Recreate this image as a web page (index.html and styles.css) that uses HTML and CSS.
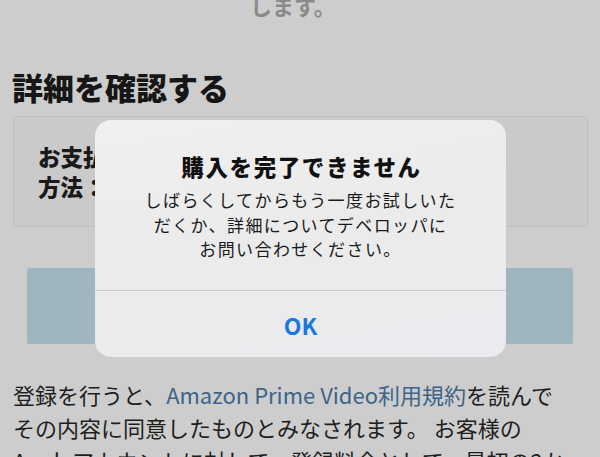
FILE: index.html
```html
<!DOCTYPE html>
<html lang="ja">
<head>
<meta charset="utf-8">
<link rel="stylesheet" href="styles.css">
</head>
<body>
<div class="page">
  <p class="lead">します。</p>
  <h2 class="heading">詳細を確認する</h2>
  <div class="details">
    <p class="details-text">お支払い<br>方法：</p>
  </div>
  <div class="action"></div>
  <p class="terms">登録を行うと、<span class="link">Amazon Prime Video利用規約</span>を読んで<br>その内容に同意したものとみなされます。 お客様の<br>Appleアカウントに対して、登録料金として、最初の2か</p>
</div>
<div class="alert">
  <div class="alert-body">
    <div class="alert-title">購入を完了できません</div>
    <div class="alert-msg">しばらくしてからもう一度お試しいた<br>だくか、詳細についてデベロッパに<br>お問い合わせください。</div>
  </div>
  <div class="alert-btn">OK</div>
</div>
</body>
</html>
```
FILE: styles.css
```css
html, body {
  margin: 0;
  padding: 0;
}
body {
  width: 600px;
  height: 457px;
  overflow: hidden;
  background: #cdcdcd;
  font-family: "Noto Sans CJK JP", "Noto Sans", sans-serif;
  color: #1c1c1c;
  position: relative;
}
.page {
  padding: 0 12px 0 13px;
}
.lead {
  margin: -9px 0 0 237px;
  font-size: 22px;
  line-height: 28px;
  color: #8a8a8a;
  font-weight: 700;
  white-space: nowrap;
}
.heading {
  margin: 49px 0 0 -1px;
  font-size: 31px;
  line-height: 38px;
  font-weight: 900;
  color: #161616;
}
.details {
  margin-top: 10px;
  height: 109px;
  border: 1px solid #bdbdbd;
  border-radius: 3px;
  background: #cacaca;
}
.details-text {
  margin: 24px 0 0 24px;
  font-size: 22.5px;
  line-height: 30px;
  font-weight: 900;
  color: #1a1a1a;
}
.action {
  margin: 41px 15px 0 14px;
  height: 76px;
  background: #9fb6bf;
  border-radius: 2px;
}
.terms {
  margin: 34px 0 0 0;
  font-size: 22px;
  line-height: 33px;
  color: #1e1e1e;
  white-space: nowrap;
}
.link {
  color: #3e6388;
}
.alert {
  position: absolute;
  left: 95px;
  top: 120px;
  width: 411px;
  height: 237px;
  border-radius: 16px;
  background: linear-gradient(170deg, #f0f0f0 0%, #ebebeb 45%, #e9ebee 100%);
  display: flex;
  flex-direction: column;
  overflow: hidden;
}
.alert-body {
  padding: 31px 10px 0;
  height: 171px;
  flex: none;
  box-sizing: border-box;
  text-align: center;
  border-bottom: 1px solid #c8c9cb;
}
.alert-title {
  font-size: 22.5px;
  line-height: 30px;
  font-weight: 900;
  letter-spacing: 1.6px;
  color: #111;
  margin-right: -2px;
}
.alert-msg {
  margin-top: 7px;
  font-size: 17px;
  line-height: 24.5px;
  letter-spacing: 1.4px;
  color: #1a1a1a;
}
.alert-btn {
  flex: 1;
  display: flex;
  align-items: center;
  justify-content: center;
  font-size: 23px;
  font-weight: 700;
  color: #1b78de;
  padding-top: 2px;
}
```
